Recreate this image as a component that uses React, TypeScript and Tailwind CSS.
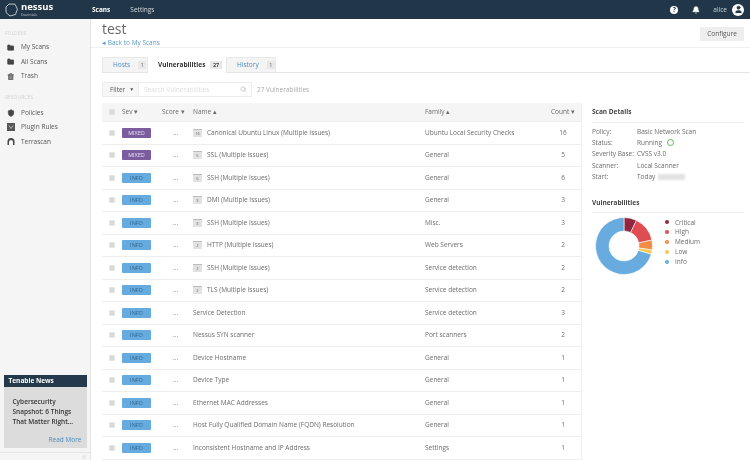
import { Bell, ChevronsLeft, Folder, Search, Shield, Trash2, User } from "lucide-react";

const rows = [
  { sev: "MIXED", name: "Canonical Ubuntu Linux (Multiple Issues)", n: 16, family: "Ubuntu Local Security Checks", count: 16 },
  { sev: "MIXED", name: "SSL (Multiple Issues)", n: 5, family: "General", count: 5 },
  { sev: "INFO", name: "SSH (Multiple Issues)", n: 6, family: "General", count: 6 },
  { sev: "INFO", name: "DMI (Multiple Issues)", n: 3, family: "General", count: 3 },
  { sev: "INFO", name: "SSH (Multiple Issues)", n: 3, family: "Misc.", count: 3 },
  { sev: "INFO", name: "HTTP (Multiple Issues)", n: 2, family: "Web Servers", count: 2 },
  { sev: "INFO", name: "SSH (Multiple Issues)", n: 2, family: "Service detection", count: 2 },
  { sev: "INFO", name: "TLS (Multiple Issues)", n: 2, family: "Service detection", count: 2 },
  { sev: "INFO", name: "Service Detection", family: "Service detection", count: 3 },
  { sev: "INFO", name: "Nessus SYN scanner", family: "Port scanners", count: 2 },
  { sev: "INFO", name: "Device Hostname", family: "General", count: 1 },
  { sev: "INFO", name: "Device Type", family: "General", count: 1 },
  { sev: "INFO", name: "Ethernet MAC Addresses", family: "General", count: 1 },
  { sev: "INFO", name: "Host Fully Qualified Domain Name (FQDN) Resolution", family: "General", count: 1 },
  { sev: "INFO", name: "Inconsistent Hostname and IP Address", family: "Settings", count: 1 },
];

const slices = [
  { label: "Critical", color: "#91243e", from: 0, to: 26 },
  { label: "High", color: "#dd4b50", from: 26, to: 78 },
  { label: "Medium", color: "#f18c43", from: 78, to: 98 },
  { label: "Low", color: "#f8c851", from: 98, to: 107 },
  { label: "Info", color: "#67acdf", from: 107, to: 360 },
];

const details = [
  ["Policy:", "Basic Network Scan"],
  ["Status:", "Running"],
  ["Severity Base:", "CVSS v3.0"],
  ["Scanner:", "Local Scanner"],
  ["Start:", "Today"],
];

function arc(from: number, to: number) {
  const R = 28.5;
  const r = 15;
  const pt = (rad: number, deg: number) => {
    const a = (deg * Math.PI) / 180;
    return `${(30 + rad * Math.sin(a)).toFixed(2)} ${(30 - rad * Math.cos(a)).toFixed(2)}`;
  };
  const big = to - from > 180 ? 1 : 0;
  return `M${pt(R, from)} A${R} ${R} 0 ${big} 1 ${pt(R, to)} L${pt(r, to)} A${r} ${r} 0 ${big} 0 ${pt(r, from)} Z`;
}

const Check = () => <span className="block w-[6px] h-[6px] bg-[#d8d8d8] border border-[#e6e6e6]" />;

const SideItem = ({ icon, label }: { icon: React.ReactNode; label: string }) => (
  <div className="flex items-center h-[14.5px] pl-[6px] gap-[6px] text-[6.5px] text-[#555]">
    <span className="w-[9px] flex justify-center">{icon}</span>
    {label}
  </div>
);

export default function App() {
  return (
    <div className="w-[750px] h-[460px] overflow-hidden bg-white opacity-[0.99] font-['Open_Sans',sans-serif] text-[#6b6b6b] flex flex-col">
      <header className="h-[19px] shrink-0 bg-[#1f3547] flex items-center text-white">
        <div className="w-[92px] flex items-center pl-[5px] gap-[3px]">
          <svg width="13" height="14" viewBox="0 0 13 14" fill="none" stroke="#dfe6ea" strokeWidth="0.8">
            <path d="M4 1 L10 1.2 L12.4 6 L10.5 11.5 L5 13 L1 9.5 L1 4 Z" />
          </svg>
          <div className="flex flex-col">
            <span className="text-[9.5px] font-bold leading-[10px]">nessus</span>
            <span className="text-[3.5px] leading-[5px] text-[#b8c4cc]">Essentials</span>
          </div>
        </div>
        <span className="text-[6.5px] font-bold">Scans</span>
        <span className="text-[6.5px] ml-[20px] text-[#d4dbe0]">Settings</span>
        <div className="ml-auto flex items-center pr-[6px]">
          <span className="w-[8px] h-[8px] rounded-full bg-white text-[#1f3547] text-[6.5px] font-bold leading-[8px] text-center">?</span>
          <Bell size={8} className="ml-[14px] fill-white" />
          <span className="ml-[13px] text-[6.5px] text-[#c8d2d8]">alice</span>
          <span className="ml-[5px] w-[12px] h-[12px] rounded-full bg-white flex items-center justify-center">
            <User size={9} className="text-[#1f3547] fill-[#1f3547]" />
          </span>
        </div>
      </header>

      <div className="flex flex-1 min-h-0">
        <aside className="w-[91px] shrink-0 bg-[#f5f5f5] border-r border-[#e4e4e4] flex flex-col">
          <div className="pt-[11px] pl-[5px] text-[5px] leading-[6px] text-[#d4d4d4]">FOLDERS</div>
          <div className="mt-[4px]">
            <SideItem icon={<Folder size={7.5} className="text-[#444] fill-[#444]" />} label="My Scans" />
            <SideItem icon={<Folder size={7.5} className="text-[#444] fill-[#444]" />} label="All Scans" />
            <SideItem icon={<Trash2 size={7.5} className="text-[#444] fill-[#888]" />} label="Trash" />
          </div>
          <div className="mt-[10px] pl-[5px] text-[5px] leading-[6px] text-[#d4d4d4]">RESOURCES</div>
          <div className="mt-[6px]">
            <SideItem icon={<Shield size={8} className="text-[#444] fill-[#444]" />} label="Policies" />
            <SideItem
              icon={
                <svg width="8" height="8" viewBox="0 0 8 8">
                  <rect x="0" y="0" width="8" height="8" fill="#555" />
                  <path d="M2 2.5 L4 5.5 L6 2.5" stroke="#ddd" strokeWidth="0.7" fill="none" />
                </svg>
              }
              label="Plugin Rules"
            />
            <SideItem
              icon={
                <svg width="8" height="7" viewBox="0 0 8 7">
                  <path d="M0.5 7 V3.5 A3.5 3.5 0 0 1 7.5 3.5 V7 H6 V4 A2 2 0 0 0 2 4 V7 Z" fill="#444" />
                </svg>
              }
              label="Terrascan"
            />
          </div>
          <div className="mt-auto mx-[3.5px] h-[73px] flex flex-col bg-[#dcdcdc]">
            <div className="h-[12px] bg-[#22374a] text-white text-[6.5px] font-bold pl-[5px] leading-[12px]">Tenable News</div>
            <div className="pl-[9px] pt-[10px] text-[6.5px] font-semibold leading-[10px] text-[#333]">
              Cybersecurity
              <br />
              Snapshot: 6 Things
              <br />
              That Matter Right...
            </div>
            <div className="mt-auto mb-[3px] mr-[5px] text-right text-[6.5px] text-[#4c8cbc]">Read More</div>
          </div>
          <div className="mt-[4px] h-[8px] border-t border-[#e6e6e6] flex justify-end pr-[3px] pt-[1px]">
            <ChevronsLeft size={6} className="text-[#bbb]" />
          </div>
        </aside>

        <main className="flex-1 min-w-0 flex flex-col">
          <div className="h-[29px] shrink-0 border-b border-[#f0f0f0] pl-[11px] pr-[6px] flex justify-between">
            <div>
              <div className="text-[14px] leading-[18px] mt-[1px] text-[#666]">test</div>
              <div className="text-[6.5px] leading-[8px] mt-[1px] text-[#5d9bc9]">◂ Back to My Scans</div>
            </div>
            <div className="mt-[8px] w-[44px] h-[14px] bg-[#eeeeee] rounded-[1px] text-[6.5px] leading-[14px] text-center text-[#555]">Configure</div>
          </div>

          <div className="flex flex-1 min-h-0">
            <section className="w-[490px] shrink-0 pl-[11px]">
              <div className="mt-[9px] flex h-[16px] w-[648px] border-b border-[#e4e4e4] text-[6.5px]">
                <div className="w-[46px] flex items-center bg-[#f4f4f4] border border-[#e8e8e8] border-b-0 rounded-tl-[2px] pl-[10px] text-[#4c8cbc]">
                  Hosts
                  <span className="ml-[8px] px-[2.5px] bg-[#e8e8e8] text-[5.5px] text-[#666]">1</span>
                </div>
                <div className="w-[78px] h-[16px] flex items-center bg-white pl-[10px] font-bold text-[#333]">
                  Vulnerabilities
                  <span className="ml-[5px] px-[2.5px] bg-[#e8e8e8] text-[5.5px] text-[#444]">27</span>
                </div>
                <div className="w-[50px] flex items-center bg-[#f4f4f4] border border-[#e8e8e8] border-b-0 rounded-tr-[2px] pl-[10px] text-[#4c8cbc]">
                  History
                  <span className="ml-[8px] px-[2.5px] bg-[#e8e8e8] text-[5.5px] text-[#666]">1</span>
                </div>
              </div>

              <div className="mt-[9px] flex items-center h-[15px]">
                <div className="w-[37px] h-full flex items-center border border-[#ececec] bg-[#f7f7f7] pl-[7px] text-[6.5px] text-[#555]">
                  Filter
                  <span className="ml-[4px] text-[5px]">▼</span>
                </div>
                <div className="w-[113px] h-full flex items-center border border-l-0 border-[#ececec] pl-[5px] pr-[5px] text-[6.5px] text-[#dddddd]">
                  Search Vulnerabilities
                  <Search size={6.5} className="ml-auto text-[#aaa]" />
                </div>
                <span className="ml-[5px] text-[6.5px] text-[#aaa]">27 Vulnerabilities</span>
              </div>

              <div className="mt-[6px] w-[480px] text-[6.5px] border-r border-[#f0f0f0]">
                <div className="h-[19px] flex items-center bg-[#f5f5f5] border-b border-[#eee]">
                  <span className="w-[20px] flex justify-center"><Check /></span>
                  <span className="w-[40px]">Sev ▾</span>
                  <span className="w-[31px]">Score ▾</span>
                  <span className="w-[232px]">Name ▴</span>
                  <span className="w-[126px]">Family ▴</span>
                  <span className="whitespace-nowrap">Count ▾</span>
                </div>
                {rows.map((r, i) => (
                  <div key={i} className="h-[22.5px] flex items-center border-b border-[#eeeeee]">
                    <span className="w-[20px] flex justify-center"><Check /></span>
                    <span className="w-[40px]">
                      <span
                        className={
                          r.sev === "MIXED"
                            ? "block w-[29px] h-[10px] rounded-[1px] bg-[#7a5c9e] text-center text-[5.5px] leading-[10px] text-[#e4dcee]"
                            : "block w-[29px] h-[10px] rounded-[1px] bg-[#65abe0] text-center text-[5.5px] leading-[10px] text-[#2f648c]"
                        }
                      >
                        {r.sev}
                      </span>
                    </span>
                    <span className="w-[31px] pl-[11px] text-[#888]">...</span>
                    <span className="w-[232px] flex items-center">
                      {r.n !== undefined && (
                        <span className="w-[9px] h-[8px] mr-[5px] bg-[#e2e2e2] border-t border-[#bdbdbd] text-[4px] leading-[8px] text-center text-[#666]">
                          {r.n}
                        </span>
                      )}
                      {r.name}
                    </span>
                    <span className="w-[127px]">{r.family}</span>
                    <span className="w-[22px] text-center">{r.count}</span>
                  </div>
                ))}
              </div>
            </section>

            <section className="flex-1 min-w-0 pl-[11px] pr-[6px] pt-[60px]">
              <div className="text-[6.5px] font-bold text-[#444] leading-[8px] pb-[6px] border-b border-[#eeeeee]">Scan Details</div>
              <div className="mt-[3px] text-[6.5px]">
                {details.map(([k, v]) => (
                  <div key={k} className="flex items-center h-[11.3px]">
                    <span className="w-[45px]">{k}</span>
                    <span>{v}</span>
                    {v === "Running" && <span className="ml-[5px] w-[7px] h-[7px] rounded-full border-[1.5px] border-[#5cb85c]" />}
                    {v === "Today" && <span className="ml-[3px] w-[27px] h-[6px] bg-[#e2e2e2] blur-[1px]" />}
                  </div>
                ))}
              </div>
              <div className="mt-[17px] text-[6.5px] font-bold text-[#444] leading-[8px] pb-[5px] border-b border-[#eeeeee]">Vulnerabilities</div>
              <div className="flex mt-[3px]">
                <svg width="60" height="60" viewBox="0 0 60 60" className="ml-[2px] shrink-0">
                  {slices.map((s) => (
                    <path key={s.label} d={arc(s.from, s.to)} fill={s.color} stroke="#fff" strokeWidth="0.6" />
                  ))}
                </svg>
                <div className="ml-[11px] mt-[1px]">
                  {slices.map((s) => (
                    <div key={s.label} className="flex items-center h-[9.8px] text-[6.5px]">
                      <span className="w-[4px] h-[4px] rounded-full mr-[6px]" style={{ backgroundColor: s.color }} />
                      {s.label}
                    </div>
                  ))}
                </div>
              </div>
            </section>
          </div>
        </main>
      </div>
    </div>
  );
}
